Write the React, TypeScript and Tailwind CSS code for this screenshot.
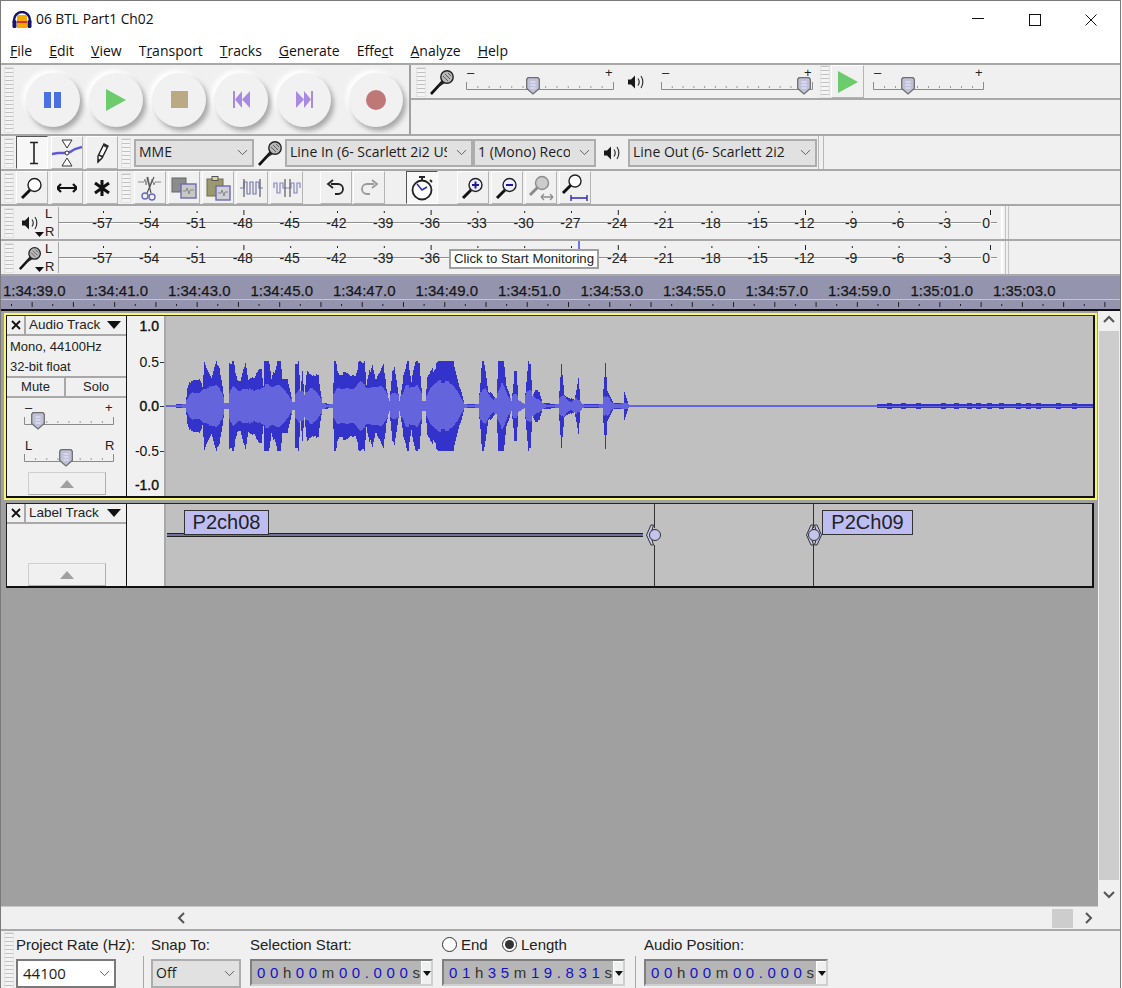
import { ChevronDown } from "lucide-react";
import type { ReactNode } from "react";

const uiFont = "font-['Open_Sans','Noto_Sans',sans-serif]";

// [x, peak] pairs read off the clip, x in page pixels
const PEAKS: [number, number][] = [
  [165, 1], [184, 2], [186, 17], [190, 27], [197, 28], [201, 20], [203, 45], [205, 38], [210, 28], [215, 45], [218, 40], [221, 22],
  [223, 3], [227, 3], [228, 45], [232, 43], [236, 27], [240, 27], [244, 43], [247, 28], [253, 30], [257, 36], [260, 36], [262, 20],
  [263, 45], [267, 45], [270, 25], [276, 45], [279, 45], [281, 25], [286, 25], [291, 4], [293, 4], [294, 45], [297, 45], [299, 15],
  [301, 36], [303, 10], [306, 37], [312, 30], [317, 28], [321, 3], [331, 2], [333, 45], [338, 33], [345, 33], [353, 27], [359, 45],
  [363, 44], [365, 20], [371, 44], [375, 25], [382, 44], [385, 15], [388, 5], [391, 35], [393, 36], [398, 5], [402, 30], [407, 45],
  [410, 25], [415, 45], [418, 45], [421, 5], [424, 5], [426, 27], [433, 38], [440, 45], [448, 45], [453, 42], [458, 20], [463, 2],
  [477, 2], [481, 45], [483, 40], [487, 15], [495, 8], [497, 45], [502, 45], [505, 20], [510, 5], [513, 33], [515, 33], [517, 6],
  [523, 2], [527, 44], [529, 44], [531, 10], [533, 14], [538, 14], [541, 3], [557, 2], [560, 38], [563, 10], [573, 6], [577, 27],
  [579, 5], [581, 2], [601, 2], [604, 45], [606, 15], [612, 3], [622, 3], [623, 13], [627, 2], [628, 1], [875, 1],
];

const TAIL_BUMPS = [888, 902, 917, 942, 955, 968, 977, 988, 1000, 1017, 1027, 1037, 1057, 1073];

const noise = (x: number) => {
  const v = Math.sin(x * 12.9898) * 43758.5453;
  return v - Math.floor(v);
};

const peakAt = (x: number) => {
  if (x >= 876) return TAIL_BUMPS.some((b) => Math.abs(b - x) <= 2) ? 3 : 1.8;
  for (let i = 1; i < PEAKS.length; i++) {
    const [x0, a0] = PEAKS[i - 1];
    const [x1, a1] = PEAKS[i];
    if (x <= x1) {
      const a = a0 + ((a1 - a0) * (x - x0)) / (x1 - x0);
      return a > 6 ? Math.min(45, a * (0.92 + noise(Math.floor(x / 3)) * 0.2)) : a;
    }
  }
  return 1;
};

function wavePaths() {
  let peak = "";
  let rms = "";
  for (let x = 165; x < 1092; x++) {
    const p = Math.max(0.6, peakAt(x));
    let sum = 0;
    for (let k = -4; k <= 4; k++) sum += peakAt(x + k);
    const r = x >= 876 ? 0.5 : Math.min(p, Math.max(0.6, (sum / 9) * (0.5 + noise(Math.floor(x / 4)) * 0.1)));
    const px = x - 165;
    peak += `M${px} ${90 - p}h1v${2 * p}h-1z`;
    rms += `M${px} ${90 - r}h1v${2 * r}h-1z`;
  }
  return { peak, rms };
}

const wave = wavePaths();

function Grip({ className = "" }: { className?: string }) {
  return (
    <div className={`w-[10px] bg-[repeating-linear-gradient(to_bottom,#c2c2c2_0,#c2c2c2_1px,#f4f4f4_1px,#f4f4f4_4px)] border border-[#e2e2e2] ${className}`} />
  );
}

function Mic({ size = 26 }: { size?: number }) {
  return (
    <svg width={size} height={size} viewBox="0 0 26 26">
      <path d="M2 25 L14 12" stroke="#111" strokeWidth="2.6" />
      <path d="M8 19 L13 11 L16 14 Z" fill="#222" />
      <circle cx="18" cy="8" r="6.2" fill="#b8b8b8" stroke="#222" strokeWidth="1.4" />
      <path d="M14 7 L19 12 M16 5 L21 10 M19 4 L22 7" stroke="#555" strokeWidth="0.9" />
    </svg>
  );
}

function Speaker() {
  return (
    <svg width="18" height="18" viewBox="0 0 18 18">
      <path d="M1 6.5h3l4-4v13l-4-4H1z" fill="#1a1a1a" />
      <path d="M11 5.5c1.4 2 1.4 5 0 7M14 3c2.4 3.4 2.4 8.600 0 12" stroke="#333" strokeWidth="1.2" fill="none" />
    </svg>
  );
}

function Slider({ w, thumb, left = "–", right = "+" }: { w: number; thumb: number; left?: string; right?: string }) {
  const count = Math.round(w / 12);
  const isWord = left === "L";
  return (
    <svg width={w + 4} height={34} className="shrink-0">
      <text x={1} y={isWord ? 13 : 12} fontSize={13} fontFamily="Liberation Sans" fill="#222">{left}</text>
      <text x={w - 8} y={isWord ? 13 : 12} fontSize={13} fontFamily="Liberation Sans" fill="#222">{right}</text>
      <path d={`M0.500 17V24.500H${w + 0.5}V17`} stroke="#8a8a8a" fill="none" />
      {Array.from({ length: count }, (_, i) => (
        <rect key={i} x={((i + 1) * w) / (count + 1)} y={21} width={1} height={2} fill="#9a9a9a" />
      ))}
      <g transform={`translate(${thumb - 7} 12)`}>
        <path d="M2 .7h10l1.300 1.500v9.300L7 17 .7 11.500V2.200z" fill="#c0c0d8" stroke="#6e6e6e" strokeWidth="1.300" />
        <path d="M4.500 5h5M4.500 8h5M4.500 11h5" stroke="#eef" strokeWidth="1" />
      </g>
    </svg>
  );
}

function TransportButton({ className = "", children }: { className?: string; children: ReactNode }) {
  return (
    <div className={`w-[54px] h-[54px] rounded-full shrink-0 flex items-center justify-center bg-[#f1f1f1] shadow-[3px_4px_5px_#a8a8a8,-3px_-3px_5px_#ffffff] ${className}`}>
      {children}
    </div>
  );
}

function Transport() {
  return (
    <div className="w-[410px] h-[69px] flex items-center border-r-2 border-[#a0a0a0] shrink-0">
      <Grip className="h-[66px] ml-[3px]" />
      <TransportButton className="ml-[12px]">
        <svg width="18" height="16" viewBox="0 0 18 16"><path d="M0 0h7v16H0zM10 0h7v16h-7z" fill="#4b70e2" /></svg>
      </TransportButton>
      <TransportButton className="ml-[9px]">
        <svg width="20" height="22" viewBox="0 0 20 22"><path d="M0 0l20 11L0 22z" fill="#6ccb6c" /></svg>
      </TransportButton>
      <TransportButton className="ml-[9px]">
        <svg width="17" height="17" viewBox="0 0 17 17"><rect width="17" height="17" fill="#bba983" /></svg>
      </TransportButton>
      <TransportButton className="ml-[8px]">
        <svg width="17" height="17" viewBox="0 0 17 17"><path d="M0 0h2v17H0zM9 0v17L2 8.500zM17 0v17L9 8.500z" fill="#a98ae2" /></svg>
      </TransportButton>
      <TransportButton className="ml-[9px]">
        <svg width="17" height="17" viewBox="0 0 17 17"><path d="M15 0h2v17h-2zM8 0v17l7-8.500zM0 0v17l8-8.500z" fill="#a98ae2" /></svg>
      </TransportButton>
      <TransportButton className="ml-[18px]">
        <svg width="20" height="20" viewBox="0 0 20 20"><circle cx="10" cy="10" r="10" fill="#bf7777" /></svg>
      </TransportButton>
    </div>
  );
}

function ToolButton({ w = 32, active = false, className = "", children }: { w?: 32 | 33; active?: boolean; className?: string; children: ReactNode }) {
  return (
    <div
      className={`${w === 32 ? "w-[32px]" : "w-[33px]"} h-[33px] shrink-0 flex items-center justify-center border ${
        active ? "border-t-[#555] border-l-[#555] border-r-white border-b-white bg-[#f7f7f7]" : "border-t-white border-l-white border-r-[#b4b4b4] border-b-[#b4b4b4] bg-[#f0f0f0]"
      } ${className}`}
    >
      {children}
    </div>
  );
}

function Magnifier({ symbol }: { symbol?: "plus" | "minus" }) {
  return (
    <svg width="24" height="24" viewBox="0 0 24 24">
      <path d="M2 22l8-8" stroke="#111" strokeWidth="3" />
      <circle cx="14.500" cy="9" r="6.500" fill={symbol ? "#eef" : "#fff"} stroke="#222" strokeWidth="1.400" />
      {symbol && <path d={symbol === "plus" ? "M11 9h7M14.500 5.500v7" : "M11 9h7"} stroke="#1a1a9a" strokeWidth="2" />}
    </svg>
  );
}

function Combo({ w, text, light = false }: { w: string; text: string; light?: boolean }) {
  return (
    <div className={`${w} shrink-0 flex items-center border-2 ${light ? "border-[#7a7a7a] bg-white pl-[5px]" : "border-[#adadad] bg-[#e1e1e1] pl-[3px]"} pr-[1px] overflow-hidden`}>
      <span className={`flex-1 overflow-hidden whitespace-nowrap pb-[2px] ${light ? "text-[15px]" : "text-[14px]"} leading-[20px] text-[#1c1c1c] ${uiFont}`}>{text}</span>
      <ChevronDown size={17} strokeWidth={1.3} className="shrink-0 text-[#555] ml-[6px]" />
    </div>
  );
}

function DeviceBar() {
  return (
    <div className="h-[35px] flex items-center border-b-2 border-[#a8a8a8]">
      <Grip className="h-[30px] ml-[3px]" />
      <div className="flex items-center ml-[2px] gap-[3px] self-start pt-0">
        <ToolButton active>
          <svg width="16" height="24" viewBox="0 0 16 24" className="ml-[3px]"><path d="M4 1.500h8M4 22.500h8M8 1.500v21" stroke="#222" strokeWidth="1.600" fill="none" /></svg>
        </ToolButton>
        <ToolButton>
          <svg width="30" height="28" viewBox="0 0 30 28">
            <path d="M10 1h10l-5 8zM10 27h10l-5-8z" fill="#fff" stroke="#333" />
            <path d="M0 15l6-1h6l6-1 5-3 7-2" stroke="#5a5ad8" strokeWidth="2.400" fill="none" />
            <circle cx="15" cy="14" r="2" fill="#fff" stroke="#333" />
          </svg>
        </ToolButton>
        <ToolButton>
          <svg width="18" height="24" viewBox="0 0 18 24"><path d="M5 15l6-12 4 2-6 12-4 4z" fill="#fff" stroke="#222" strokeWidth="1.400" /><path d="M6 14l4 2M5 21l1-3" stroke="#222" strokeWidth="1.500" /><path d="M11 3l4 2-1 2-4-2z" fill="#333" /></svg>
        </ToolButton>
      </div>
      <Grip className="h-[30px] ml-[3px]" />
      <Combo w="w-[120px] h-[28px] ml-[3px]" text="MME" />
      <div className="w-[31px] flex justify-center shrink-0"><Mic /></div>
      <Combo w="w-[188px] h-[28px]" text="Line In (6- Scarlett 2i2 USB)" />
      <Combo w="w-[123px] h-[28px]" text="1 (Mono) Recording Channels" />
      <div className="w-[32px] flex justify-center shrink-0"><Speaker /></div>
      <Combo w="w-[189px] h-[28px]" text="Line Out (6- Scarlett 2i2" />
      <div className="w-[6px] h-full border-x border-[#b8b8b8] ml-[1px]" />
    </div>
  );
}

function EditBar() {
  const wavelet = "M2 12h4M6 12V6h3v12h3V6h3v12h3V6h3v6h4";
  return (
    <div className="h-[35px] flex items-start border-b-2 border-[#a8a8a8]">
      <Grip className="h-[30px] ml-[3px] mt-[2px]" />
      <div className="flex items-center ml-[2px] gap-[3px]">
        <ToolButton><Magnifier /></ToolButton>
        <ToolButton>
          <svg width="20" height="12" viewBox="0 0 20 12"><path d="M0 6h20M0 6l4-4M0 6l4 4M20 6l-4-4M20 6l-4 4" stroke="#111" strokeWidth="2.200" fill="none" /></svg>
        </ToolButton>
        <ToolButton>
          <svg width="18" height="18" viewBox="0 0 18 18"><path d="M9 1v16M2 4l14 10M16 4L2 14" stroke="#111" strokeWidth="3" /></svg>
        </ToolButton>
      </div>
      <Grip className="h-[30px] ml-[3px] mt-[2px]" />
      <div className="flex ml-[3px] gap-[2px]">
        <ToolButton>
          <svg width="26" height="26" viewBox="0 0 26 26"><path d="M1 7h6l1-3 1 6 2-8 2 10 2-8 2 6 1-3h6" stroke="#8c8c8c" fill="none" /><path d="M17 2l-7 16M10 2l4 16" stroke="#555" strokeWidth="1.200" /><circle cx="8" cy="21" r="3" fill="none" stroke="#6a6abc" strokeWidth="1.400" /><circle cx="15" cy="22" r="3" fill="none" stroke="#6a6abc" strokeWidth="1.400" /></svg>
        </ToolButton>
        <ToolButton>
          <svg width="26" height="24" viewBox="0 0 26 24"><rect x="1" y="2" width="14" height="14" fill="#8c8c8c" stroke="#666" /><rect x="10" y="8" width="15" height="14" fill="#c8c8c8" stroke="#6a6ab0" strokeWidth="1.400" /><path d="M12 15h3l1-3 2 6 1-4h4" stroke="#888" fill="none" /></svg>
        </ToolButton>
        <ToolButton>
          <svg width="26" height="26" viewBox="0 0 26 26"><rect x="2" y="4" width="16" height="17" fill="#9c9870" stroke="#6e6b48" /><rect x="7" y="1.500" width="6" height="4" fill="#d8d4a8" stroke="#555" /><rect x="11" y="11" width="14" height="14" fill="#cfcfd8" stroke="#6a6ab0" strokeWidth="1.400" /><path d="M13 18h3l1-3 2 6 1-4h3" stroke="#888" fill="none" /></svg>
        </ToolButton>
        <ToolButton>
          <svg width="28" height="24" viewBox="0 0 28 24"><path d={wavelet} stroke="#7878b0" strokeWidth="1.200" fill="none" /><path d="M6 3v18M22 3v18" stroke="#666" strokeWidth="1.300" /></svg>
        </ToolButton>
        <ToolButton w={33}>
          <svg width="28" height="24" viewBox="0 0 28 24"><path d="M1 12V7h3v10h3V7h3v5h8V7h3v10h3V7h3v5" stroke="#8888c4" strokeWidth="1.200" fill="none" /><path d="M12 3v18M17 3v18" stroke="#666" strokeWidth="1.300" /></svg>
        </ToolButton>
      </div>
      <div className="flex ml-[17px] gap-[1px]">
        <ToolButton>
          <svg width="20" height="18" viewBox="0 0 20 18"><path d="M5 5h7a5 5 0 0 1 5 5 5 5 0 0 1-5 5H9" stroke="#222" strokeWidth="1.800" fill="none" /><path d="M7 1L2 5l5 4" stroke="#222" strokeWidth="1.800" fill="none" /></svg>
        </ToolButton>
        <ToolButton>
          <svg width="20" height="18" viewBox="0 0 20 18"><path d="M15 5H8a5 5 0 0 0-5 5 5 5 0 0 0 5 5h3" stroke="#9a9a9a" strokeWidth="1.800" fill="none" /><path d="M13 1l5 4-5 4" stroke="#9a9a9a" strokeWidth="1.800" fill="none" /></svg>
        </ToolButton>
      </div>
      <ToolButton active className="ml-[21px]">
        <svg width="24" height="26" viewBox="0 0 24 26"><circle cx="12" cy="15" r="9.500" fill="#fff" stroke="#222" strokeWidth="1.800" /><path d="M9 2h6M12 2v3M20 5l2 2" stroke="#222" strokeWidth="1.800" /><path d="M7 9l5 6 5-3" stroke="#2a2ab8" strokeWidth="1.500" fill="none" /></svg>
      </ToolButton>
      <div className="flex ml-[19px] gap-[2px]">
        <ToolButton><Magnifier symbol="plus" /></ToolButton>
        <ToolButton><Magnifier symbol="minus" /></ToolButton>
        <ToolButton>
          <svg width="28" height="28" viewBox="0 0 28 28"><path d="M3 21l8-8" stroke="#8c8c8c" strokeWidth="3" /><circle cx="15" cy="9" r="6.500" fill="#ccc" stroke="#8c8c8c" strokeWidth="1.400" /><path d="M14 23h12M14 23l3-3M14 23l3 3M26 23l-3-3M26 23l-3 3" stroke="#8c8c8c" strokeWidth="1.300" fill="none" /></svg>
        </ToolButton>
        <ToolButton>
          <svg width="28" height="28" viewBox="0 0 28 28"><path d="M2 19l8-8" stroke="#111" strokeWidth="3" /><circle cx="14" cy="7" r="6" fill="#fff" stroke="#222" strokeWidth="1.400" /><path d="M10 24h16M10 21v6M26 21v6" stroke="#2a2ab8" strokeWidth="1.400" /></svg>
        </ToolButton>
      </div>
    </div>
  );
}

const DB = ["-57", "-54", "-51", "-48", "-45", "-42", "-39", "-36", "-33", "-30", "-27", "-24", "-21", "-18", "-15", "-12", "-9", "-6", "-3"];
const MAJOR = ["-48", "-36", "-24", "-12"];

function MeterRow({ icon, covered = [], children }: { icon: ReactNode; covered?: string[]; children?: ReactNode }) {
  return (
    <div className="h-[35px] flex items-center border-b-2 border-[#a8a8a8] relative">
      <Grip className="h-[30px] ml-[3px]" />
      <div className="w-[31px] h-full flex justify-center items-center shrink-0 relative">
        {icon}
        <svg width="9" height="5" viewBox="0 0 9 5" className="absolute right-[1px] bottom-[2px]"><path d="M0 0h9L4.500 5z" fill="#111" /></svg>
      </div>
      <div className="w-[12px] shrink-0 text-[13px] leading-[18px] text-[#222] self-center flex flex-col">
        <span>L</span>
        <span>R</span>
      </div>
      <div className="w-[945px] h-[31px] ml-[1px] shrink-0 relative border-l border-[#a8a8a8] border-r-2 border-r-white flex items-center">
        <svg width="940" height="31" className="absolute left-0 top-0">
          <path d="M0 15.500H938" stroke="#8e8e8e" />
          <path d="M0 16.500H938" stroke="#fff" />
          {DB.map((d, i) => (
            <rect key={d} x={44 + i * 46.800} y={MAJOR.includes(d) ? 3 : 4} width={1} height={MAJOR.includes(d) ? 5 : 2} fill="#222" />
          ))}
          <rect x={931} y={3} width={1} height={5} fill="#222" />
        </svg>
        <div className="relative flex pl-[20px] text-[14px] leading-[16px] text-[#222]">
          {DB.map((d) => (
            <span key={d} className={`w-[46.800px] text-center ${covered.includes(d) ? "invisible" : ""}`}>{d}</span>
          ))}
          <span className="ml-[13px] bg-[#f0f0f0] px-[1px]">0</span>
        </div>
      </div>
      <div className="w-[4px] h-full border-x border-[#c4c4c4] ml-[2px]" />
      {children}
    </div>
  );
}

const TIMES = ["1:34:39.0", "1:34:41.0", "1:34:43.0", "1:34:45.0", "1:34:47.0", "1:34:49.0", "1:34:51.0", "1:34:53.0", "1:34:55.0", "1:34:57.0", "1:34:59.0", "1:35:01.0", "1:35:03.0"];

function Timeline() {
  return (
    <div className="h-[35px] bg-[#9494ae] border-b-2 border-[#111] shrink-0">
      <div className="h-[23px] flex items-end pl-[2px] text-[15px] leading-[16px] text-[#151515] [-webkit-text-stroke:0.25px_#222] whitespace-nowrap overflow-hidden">
        {TIMES.map((t) => (
          <span key={t} className="w-[82.500px] shrink-0">{t}</span>
        ))}
      </div>
      <svg width="1120" height="10" className="block border-t border-[#c4c4d4]">
        {Array.from({ length: 56 }, (_, i) => (
          <rect key={i} x={10 + i * 20.630} y={i % 2 ? 2 : 4} width={1} height={i % 2 ? 5 : 2} fill="#222" />
        ))}
      </svg>
    </div>
  );
}

function TrackHeader({ title }: { title: string }) {
  return (
    <div className="h-[20px] flex border-b-2 border-[#a8a8a8]">
      <div className="w-[19px] flex items-center justify-center border-r-2 border-[#a8a8a8]">
        <svg width="10" height="10" viewBox="0 0 10 10"><path d="M1 1l8 8M9 1L1 9" stroke="#111" strokeWidth="1.800" /></svg>
      </div>
      <div className="flex-1 flex items-center pl-[3px] text-[13.500px] text-[#222]">
        <span className="flex-1">{title}</span>
        <svg width="14" height="8" viewBox="0 0 14 8" className="mr-[5px]"><path d="M0 0h14L7 8z" fill="#111" /></svg>
      </div>
    </div>
  );
}

function CollapseButton({ className = "" }: { className?: string }) {
  return (
    <div className={`w-[78px] h-[23px] mx-auto flex items-center justify-center border border-[#b0b0b0] border-t-[#cfcfcf] border-l-[#cfcfcf] ${className}`}>
      <svg width="14" height="8" viewBox="0 0 14 8"><path d="M0 8h14L7 0z" fill="#a0a0a0" /></svg>
    </div>
  );
}

function RulerMark({ text, tick = false, bold = false, className = "" }: { text: string; tick?: boolean; bold?: boolean; className?: string }) {
  return (
    <div className={`flex justify-end items-center ${className}`}>
      <span className={bold ? "[-webkit-text-stroke:0.4px_#111]" : ""}>{text}</span>
      <span className={`w-[4px] h-[1px] ml-[1px] ${tick ? "bg-[#333]" : ""}`} />
    </div>
  );
}

function AudioTrack() {
  return (
    <div className="ml-[3px] mt-[2px] w-[1093px] h-[187px] border-2 border-[#f8f870] shrink-0">
      <div className="h-full flex border-t border-l border-r-2 border-b-2 border-[#111] border-t-[#333]">
        <div className="w-[119px] bg-[#f0f0f0] shrink-0 text-[#222]">
          <TrackHeader title="Audio Track" />
          <div className="h-[42px] pl-[3px] pt-[1px] text-[13px] leading-[20px] border-b-2 border-[#a8a8a8]">
            <div>Mono, 44100Hz</div>
            <div>32-bit float</div>
          </div>
          <div className="h-[20px] flex text-[13px] border-b-2 border-[#a8a8a8] text-center leading-[18px]">
            <div className="w-[59px] border-r-2 border-[#a8a8a8]">Mute</div>
            <div className="flex-1">Solo</div>
          </div>
          <div className="pl-[17px] pt-[2px]">
            <Slider w={89} thumb={14} />
            <div className="mt-[3px]">
              <Slider w={89} thumb={42} left="L" right="R" />
            </div>
          </div>
          <CollapseButton className="mt-[1px]" />
        </div>
        <div className="w-[40px] shrink-0 bg-[#f0f0f0] border-l border-[#111] border-r-2 border-r-[#a8a8a8] text-[14px] leading-[16px] text-[#111] pt-[2px]">
          <RulerMark text="1.0" bold />
          <RulerMark text="0.5" tick className="mt-[20px]" />
          <RulerMark text="0.0" tick bold className="mt-[28px]" />
          <RulerMark text="-0.5" tick className="mt-[29px]" />
          <RulerMark text="-1.0" bold className="mt-[18px]" />
        </div>
        <div className="flex-1 bg-[#c0c0c0] overflow-hidden">
          <svg width="927" height="180" className="block" shapeRendering="crispEdges">
            <rect y="89.500" width="927" height="1" fill="#5454d8" />
            <path d={wave.peak} fill="#3333cc" />
            <path d={wave.rms} fill="#6464dc" />
          </svg>
        </div>
      </div>
    </div>
  );
}

function LabelHandle({ both = false }: { both?: boolean }) {
  const fill = "#c4c4ec";
  return (
    <svg width="18" height="22" viewBox="0 0 18 22" className="block">
      <path d="M6 1L1.500 11 6 21h2.500L7 16V6l1.500-5z" fill={fill} stroke="#333" />
      {both && <path d="M12 1l4.500 10L12 21H9.500L11 16V6L9.500 1z" fill={fill} stroke="#333" />}
      <circle cx={both ? 9 : 10} cy="11" r="5.500" fill={fill} stroke="#333" />
    </svg>
  );
}

function LabelTrack() {
  const label = "absolute top-[6px] h-[25px] bg-[#bdbdf2] border border-[#333] text-[20px] leading-[23px] text-center text-[#222]";
  return (
    <div className="ml-[5px] mt-[3px] w-[1088px] h-[85px] flex border border-[#222] border-r-2 border-b-2 border-r-[#111] border-b-[#111] shrink-0">
      <div className="w-[119px] bg-[#f0f0f0] shrink-0 text-[#222] flex flex-col">
        <TrackHeader title="Label Track" />
        <CollapseButton className="mt-auto" />
      </div>
      <div className="w-[40px] shrink-0 bg-[#f0f0f0] border-l border-[#111] border-r-2 border-r-[#a8a8a8]" />
      <div className="flex-1 bg-[#c0c0c0] relative">
        <div className="absolute left-[1px] top-[29px] w-[476px] h-[4px] bg-[#7070a0] border-y border-[#222]" />
        <div className={`${label} left-[18px] w-[85px]`}>P2ch08</div>
        <div className={`${label} left-[656px] w-[91px]`}>P2Ch09</div>
        <div className="absolute left-[488px] top-0 h-[24px] w-[1px] bg-[#333]" />
        <div className="absolute left-[488px] top-[41px] h-[41px] w-[1px] bg-[#333]" />
        <div className="absolute left-[479px] top-[20px]"><LabelHandle /></div>
        <div className="absolute left-[647px] top-0 h-[24px] w-[1px] bg-[#333]" />
        <div className="absolute left-[647px] top-[41px] h-[41px] w-[1px] bg-[#333]" />
        <div className="absolute left-[639px] top-[20px]"><LabelHandle both /></div>
      </div>
    </div>
  );
}

function TimeField({ width, value }: { width: string; value: string }) {
  return (
    <div className={`${width} h-[27px] bg-[#b6b6b6] border-2 border-[#7f7f7f] border-r-[#d0d0d0] border-b-[#d0d0d0] flex items-center pl-[5px]`}>
      <div className="flex-1 w-0 min-w-0 text-[15px] tracking-[4.600px] whitespace-nowrap leading-[20px]">
        {value.split("").map((c, i) => (
          <span key={i} className={/[hms]/.test(c) ? "text-[#333]" : "text-[#1212c8]"}>{c}</span>
        ))}
      </div>
      <div className="w-[10px] h-full bg-[#f0f0f0] border-l border-t border-white flex items-center justify-center">
        <svg width="8" height="5" viewBox="0 0 8 5"><path d="M0 0h8L4 5z" fill="#111" /></svg>
      </div>
    </div>
  );
}

function Field({ label, className = "", children }: { label: ReactNode; className?: string; children: ReactNode }) {
  return (
    <div className={`flex flex-col shrink-0 ${className}`}>
      <div className="h-[17px] text-[15px] leading-[17px] text-[#222] whitespace-nowrap">{label}</div>
      <div className="mt-[6px]">{children}</div>
    </div>
  );
}

function SelectionBar() {
  return (
    <div className="flex-1 flex border-t-2 border-[#a8a8a8] pt-[5px] overflow-hidden">
      <Grip className="h-[60px] ml-[3px] mt-[-4px] shrink-0" />
      <Field label="Project Rate (Hz):" className="ml-[2px] w-[127px]">
        <Combo w="w-[100px] h-[29px]" text="44100" light />
      </Field>
      <div className="w-[1px] h-[40px] bg-[#a8a8a8] mt-[20px] shrink-0" />
      <Field label="Snap To:" className="ml-[7px] w-[99px]">
        <Combo w="w-[90px] h-[29px]" text="Off" />
      </Field>
      <Field label="Selection Start:" className="w-[192px]">
        <TimeField width="w-[183px]" value="00h00m00.000s" />
      </Field>
      <Field
        className="w-[193px]"
        label={
          <div className="flex items-center">
            <span className="w-[15px] h-[15px] rounded-full border border-[#333] bg-white mr-[4px]" />
            <span className="w-[41px]">End</span>
            <span className="w-[15px] h-[15px] rounded-full border border-[#333] bg-white mr-[4px] flex items-center justify-center">
              <span className="w-[9px] h-[9px] rounded-full bg-[#333]" />
            </span>
            <span>Length</span>
          </div>
        }
      >
        <TimeField width="w-[183px]" value="01h35m19.831s" />
      </Field>
      <div className="w-[1px] h-[40px] bg-[#a8a8a8] mt-[20px] shrink-0" />
      <Field label="Audio Position:" className="ml-[8px]">
        <TimeField width="w-[184px]" value="00h00m00.000s" />
      </Field>
    </div>
  );
}

export default function App() {
  const menus: [string, string, string][] = [
    ["", "F", "ile"], ["", "E", "dit"], ["", "V", "iew"], ["T", "r", "ansport"], ["", "T", "racks"],
    ["", "G", "enerate"], ["Effe", "c", "t"], ["", "A", "nalyze"], ["", "H", "elp"],
  ];
  return (
    <div className="w-[1121px] h-[988px] overflow-hidden bg-[#f0f0f0] border-t border-l border-r border-[#7a7a7a] flex flex-col font-['Liberation_Sans',sans-serif]">
      <div className="h-[37px] bg-white flex items-center shrink-0">
        <svg width="20" height="18" viewBox="0 0 20 18" className="ml-[11px]">
          <path d="M2 12V9a8 8 0 0 1 16 0v3" stroke="#14146a" strokeWidth="2.400" fill="none" />
          <rect x="0.500" y="9" width="4" height="8" rx="1.500" fill="#14146a" />
          <rect x="15.500" y="9" width="4" height="8" rx="1.500" fill="#14146a" />
          <rect x="5" y="4" width="10" height="13" fill="#f5a800" />
          <path d="M5 11h10" stroke="#d8301c" strokeWidth="2" />
        </svg>
        <span className={`ml-[4px] text-[13.800px] text-[#111] ${uiFont}`}>06 BTL Part1 Ch02</span>
        <div className="ml-auto flex h-full mr-[1px]">
          <div className="w-[56px] flex items-center justify-center pb-[1px]">
            <svg width="12" height="2"><rect width="12" height="1" fill="#111" /></svg>
          </div>
          <div className="w-[57px] flex items-center justify-center">
            <svg width="12" height="12"><rect x="0.500" y="0.500" width="11" height="11" fill="none" stroke="#111" /></svg>
          </div>
          <div className="w-[56px] flex items-center justify-center">
            <svg width="12" height="12"><path d="M0.500 0.500l11 11M11.500 0.500l-11 11" stroke="#111" /></svg>
          </div>
        </div>
      </div>
      <div className={`h-[27px] bg-white flex items-center pl-[9px] pb-[1px] gap-[17px] text-[14px] text-[#111] border-b-2 border-[#a8a8a8] shrink-0 ${uiFont}`}>
        {menus.map(([a, u, b]) => (
          <span key={a + u + b}>{a}<span className="underline">{u}</span>{b}</span>
        ))}
      </div>

      <div className="flex border-b-2 border-[#a8a8a8] shrink-0">
        <Transport />
        <div className="flex-1 flex flex-col">
          <div className="h-[35px] flex items-start border-b-2 border-[#a8a8a8]">
            <Grip className="h-[30px] ml-[5px] mt-[2px]" />
            <div className="w-[31px] flex justify-center pt-[4px] shrink-0"><Mic /></div>
            <div className="ml-[9px]"><Slider w={147} thumb={67} /></div>
            <div className="w-[38px] flex justify-center pt-[8px] shrink-0"><Speaker /></div>
            <div className="ml-[6px]"><Slider w={151} thumb={143} /></div>
            <Grip className="h-[33px] ml-[4px]" />
            <ToolButton w={33} className="ml-[1px]">
              <svg width="20" height="22" viewBox="0 0 20 22"><path d="M0 0l20 11L0 22z" fill="#6ccb6c" /></svg>
            </ToolButton>
            <div className="ml-[9px]"><Slider w={110} thumb={35} /></div>
          </div>
          <div className="flex-1" />
        </div>
      </div>

      <DeviceBar />
      <EditBar />
      <MeterRow icon={<Speaker />} />
      <MeterRow icon={<Mic size={24} />} covered={["-33", "-30", "-27"]}>
        <div className="absolute left-[577px] top-0 w-[2px] h-[8px] bg-[#7070f0]" />
        <div className="absolute left-[448px] top-[8px] w-[150px] h-[20px] bg-white border-2 border-[#a0a0a0] text-[13.200px] leading-[16px] text-center text-[#222] whitespace-nowrap">
          Click to Start Monitoring
        </div>
      </MeterRow>
      <Timeline />

      <div className="h-[596px] flex shrink-0">
        <div className="flex-1 bg-[#a0a0a0] flex flex-col border-b border-[#c8c8c8]">
          <AudioTrack />
          <LabelTrack />
        </div>
        <div className="w-[22px] bg-[#f0f0f0] flex flex-col items-center shrink-0">
          <svg width="12" height="8" viewBox="0 0 12 8" className="mt-[4px] mb-[6px]"><path d="M1 7l5-5 5 5" stroke="#555" strokeWidth="2" fill="none" /></svg>
          <div className="w-[20px] h-[549px] bg-[#cdcdcd] mt-[2px]" />
          <svg width="12" height="8" viewBox="0 0 12 8" className="mt-[11px]"><path d="M1 1l5 5 5-5" stroke="#555" strokeWidth="2" fill="none" /></svg>
        </div>
      </div>

      <div className="h-[22px] flex items-center shrink-0 bg-[#f0f0f0]">
        <svg width="8" height="12" viewBox="0 0 8 12" className="ml-[176px]"><path d="M7 1L2 6l5 5" stroke="#555" strokeWidth="2" fill="none" /></svg>
        <div className="w-[21px] h-[19px] bg-[#cdcdcd] ml-[867px]" />
        <svg width="8" height="12" viewBox="0 0 8 12" className="ml-[12px]"><path d="M1 1l5 5-5 5" stroke="#555" strokeWidth="2" fill="none" /></svg>
      </div>

      <SelectionBar />
    </div>
  );
}
